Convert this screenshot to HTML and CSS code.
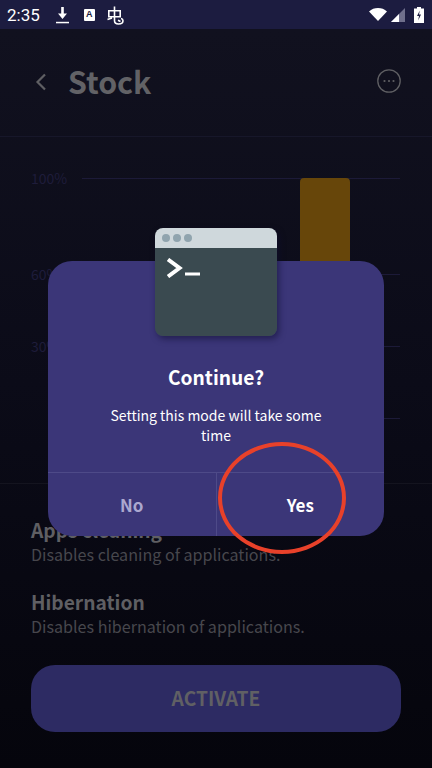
FILE: index.html
```html
<!DOCTYPE html>
<html lang="en">
<head>
<meta charset="utf-8">
<title>Stock</title>
<link rel="stylesheet" href="styles.css">
</head>
<body>
<div class="screen">
  <div class="statusbar">
    <span class="time">2:35</span>
    <svg class="st-ic st-dl" viewBox="0 0 13 17"><path d="M5.200 0h2.600v6.500H11L6.500 12 2 6.500h3.200z" fill="#fff"/><rect x="0" y="14.800" width="13" height="1.500" fill="#fff"/></svg>
    <span class="st-a">A</span>
    <svg class="st-ic st-bug" viewBox="0 0 17 19" fill="none" stroke="#fff" stroke-width="1.600"><path d="M1.800 4.800h11.400v6H1.800zM7.500 0.500v10.300M0.500 13.500l4.500-1.500M7.500 10.800v3.700c0 2.200 1.500 3.500 4 3.500 3 0 4.500-1.500 4.500-3.300 0-1.200-.8-2-2-2.200M11 14.300l2.500 1.200"/></svg>
    <span class="st-space"></span>
    <svg class="st-ic st-wifi" viewBox="0 0 18 13"><path d="M0 3.400C2.500 1.200 5.600 0 9 0s6.500 1.200 9 3.400L9 13z" fill="#fff"/></svg>
    <svg class="st-ic st-sig" viewBox="0 0 14 14"><path d="M14 0v14H0z" fill="#6f6f8c"/><path d="M8 6v8H0z" fill="#fff"/></svg>
    <svg class="st-ic st-bat" viewBox="0 0 10 16"><path d="M3 0h4v1.500h3V16H0V1.500h3z" fill="#fff"/><path d="M5.800 3.500 3 9h2l-.8 4.500L7 7.500H5z" fill="#1c1c40"/></svg>
  </div>

  <header class="topbar">
    <svg class="back" viewBox="0 0 12 18" fill="none" stroke="#5f5f63" stroke-width="2.200"><path d="M10 1.500 2.500 9l7.500 7.500"/></svg>
    <h1 class="title">Stock</h1>
    <svg class="more" viewBox="0 0 24 24" fill="none" stroke="#5f5f63" stroke-width="1.300"><circle cx="12" cy="12" r="11.200"/><g fill="#5f5f63" stroke="none"><circle cx="7.500" cy="12" r="1.100"/><circle cx="12" cy="12" r="1.100"/><circle cx="16.500" cy="12" r="1.100"/></g></svg>
  </header>

  <section class="chart">
    <div class="plot">
      <div class="row row-a"><span class="lab">100%</span><span class="line"></span></div>
      <div class="row row-b"><span class="lab">60%</span><span class="line"></span></div>
      <div class="row row-b"><span class="lab">30%</span><span class="line"></span></div>
      <div class="row row-z"><span class="lab"></span><span class="line"></span></div>
      <div class="bar"></div>
    </div>
  </section>

  <section class="options">
    <div class="opt">
      <div class="opt-t">Apps cleaning</div>
      <div class="opt-d">Disables cleaning of applications.</div>
    </div>
    <div class="opt">
      <div class="opt-t">Hibernation</div>
      <div class="opt-d">Disables hibernation of applications.</div>
    </div>
    <div class="activate">ACTIVATE</div>
  </section>

  <div class="dialog">
    <div class="term">
      <div class="term-top"><i></i><i></i><i></i></div>
      <div class="term-body">
        <svg class="prompt" viewBox="0 0 36 20"><path d="M2 1.500 13.500 10 2 18.500" fill="none" stroke="#fff" stroke-width="4"/><rect x="19" y="14.500" width="15" height="3" fill="#fff"/></svg>
      </div>
    </div>
    <div class="dlg-main">
      <div class="dlg-t">Continue?</div>
      <div class="dlg-m">Setting this mode will take some time</div>
    </div>
    <div class="dlg-btns">
      <div class="btn no">No</div>
      <div class="btn yes">Yes</div>
    </div>
  </div>

  <div class="ring"></div>
</div>
</body>
</html>
```

FILE: styles.css
```css
* { box-sizing: border-box; }
html, body { margin: 0; padding: 0; }
body { font-family: "Noto Sans CJK SC", "Noto Sans", sans-serif; background: #05050c; }

.screen {
  position: relative;
  width: 432px;
  height: 768px;
  overflow: hidden;
  display: flex;
  flex-direction: column;
  background: linear-gradient(180deg, #11111f 4%, #0b0b18 50%, #05050c 100%);
}

.statusbar {
  height: 29px;
  flex: none;
  display: flex;
  align-items: center;
  padding: 0 7px;
  background: #1c1c40;
  color: #fff;
}
.time { font-family: Roboto, sans-serif; font-size: 17px; margin-right: 16px; margin-top: 1px; }
.st-ic { display: block; flex: none; }
.st-dl { width: 13px; height: 17px; margin-right: 15px; margin-top: 1px; }
.st-a {
  width: 11px; height: 12px; margin-right: 12px;
  background: #fff; color: #1c1c40;
  font-family: "Liberation Sans", sans-serif; font-size: 9px; font-weight: 700;
  line-height: 11px; text-align: center; border-radius: 1px;
}
.st-bug { width: 17px; height: 19px; margin-top: 1px; }
.st-space { flex: 1; }
.st-wifi { width: 18px; height: 13px; margin-right: 4px; }
.st-sig { width: 14px; height: 14px; margin-right: 9px; margin-top: 1px; }
.st-bat { width: 10px; height: 16px; margin-right: 1px; }

.topbar {
  height: 108px;
  flex: none;
  display: flex;
  align-items: center;
  padding: 0 31px 0 35px;
  border-bottom: 1px solid #17172a;
}
.back { width: 12px; height: 18px; margin-right: 21px; margin-top: -1px; }
.title { margin: 0; flex: 1; font-size: 30.300px; font-weight: 700; line-height: 36px; color: #626266; margin-top: -3px; }
.more { width: 24px; height: 24px; margin-top: -3px; }

.chart {
  height: 347px;
  flex: none;
  padding: 41px 32px 0 31px;
  border-bottom: 1px solid #14141f;
}
.plot { position: relative; display: flex; flex-direction: column; }
.row { display: flex; align-items: flex-start; }
.row-a { height: 96px; }
.row-b { height: 72px; }
.row-z { height: 20px; }
.lab { width: 51px; flex: none; font-size: 14px; line-height: 1; margin-top: -7px; color: #1e1c3a; }
.line { flex: 1; height: 1px; background: #1c1a38; }
.bar {
  position: absolute;
  left: 269px; top: 0;
  width: 50px; height: 240px;
  background: #67460a;
  border-radius: 4px 4px 0 0;
}

.options { flex: 1; padding: 33px 31px 0; display: flex; flex-direction: column; }
.opt { margin-bottom: 24px; }
.opt-t { font-size: 19.200px; font-weight: 700; line-height: 26px; color: #5f5f63; }
.opt-d { font-size: 16.100px; line-height: 22px; color: #47474d; }
.activate {
  margin-top: 4px;
  height: 67px;
  padding-bottom: 1px;
  border-radius: 24px;
  background: #2d2b63;
  color: #606064;
  font-size: 19.200px;
  font-weight: 700;
  display: flex;
  align-items: center;
  justify-content: center;
}

.dialog {
  position: absolute;
  left: 48px; top: 261px;
  width: 336px; height: 275px;
  background: #3b3678;
  border-radius: 24px;
  display: flex;
  flex-direction: column;
  align-items: center;
}
.term {
  width: 122px; height: 108px;
  margin-top: -33px;
  flex: none;
  border-radius: 8px;
  overflow: hidden;
  box-shadow: 2px 3px 6px rgba(15, 12, 50, .55);
  display: flex;
  flex-direction: column;
}
.term-top {
  height: 20px;
  flex: none;
  background: #cfd8dc;
  display: flex;
  align-items: center;
  gap: 3px;
  padding-left: 7px;
}
.term-top i { width: 8px; height: 8px; border-radius: 50%; background: #90a4ae; display: block; }
.term-body { flex: 1; background: #3a4a50; padding: 10px 0 0 11px; }
.prompt { display: block; width: 36px; height: 20px; }

.dlg-main { flex: 1; width: 100%; display: flex; flex-direction: column; align-items: center; color: #fff; }
.dlg-t { font-size: 19.200px; font-weight: 700; line-height: 28px; margin-top: 27px; }
.dlg-m { width: 230px; text-align: center; font-size: 14px; line-height: 20px; margin-top: 14px; }
.dlg-btns { height: 64px; flex: none; width: 100%; display: flex; border-top: 1px solid #4e4a88; }
.btn { flex: 1; display: flex; align-items: center; justify-content: center; font-size: 17px; font-weight: 700; }
.no { color: #aba8cf; border-right: 1px solid #4e4a88; }
.yes { color: #fff; }

.ring {
  position: absolute;
  left: 218px; top: 442px;
  width: 128px; height: 112px;
  border: 4px solid #e8412a;
  border-radius: 50%;
}
```
